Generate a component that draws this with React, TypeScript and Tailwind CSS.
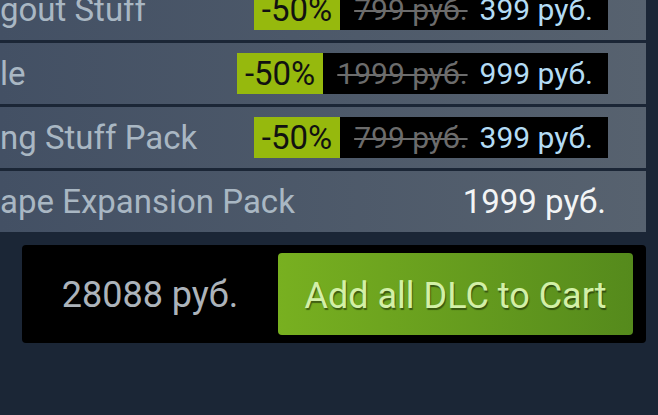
import React from 'react';

type Dlc = {
  name: string;
  price: string;
  original?: string;
  discount?: string;
};

const items: Dlc[] = [
  { name: 'gout Stuff', discount: '-50%', original: '799 руб.', price: '399 руб.' },
  { name: 'le', discount: '-50%', original: '1999 руб.', price: '999 руб.' },
  { name: 'ng Stuff Pack', discount: '-50%', original: '799 руб.', price: '399 руб.' },
  { name: 'ape Expansion Pack', price: '1999 руб.' },
];

function DlcRow({ item }: { item: Dlc }) {
  return (
    <div className="flex h-[61px] items-center justify-between bg-gradient-to-r from-[#435064] to-[#57626f] pr-[38px]">
      <span className="whitespace-nowrap text-[33px] leading-none text-[#a9b7c3]">{item.name}</span>
      {item.discount ? (
        <div className="flex h-[41px] items-stretch">
          <div className="flex items-center bg-[#96b90d] px-[8px] text-[33px] leading-none text-[#111]">
            {item.discount}
          </div>
          <div className="flex items-center gap-[12px] bg-black pl-[14px] pr-[15px] leading-none">
            <span className="text-[30px] text-[#6c6c6c] line-through decoration-[2px]">{item.original}</span>
            <span className="text-[30px] text-[#b4dcf4]">{item.price}</span>
          </div>
        </div>
      ) : (
        <span className="text-[33px] leading-none text-[#f2f4f5] pr-[2px]">{item.price}</span>
      )}
    </div>
  );
}

export default function App() {
  return (
    <div
      className="h-screen w-full overflow-hidden bg-[#1b2636] pr-[12px]"
      style={{ fontFamily: 'Roboto, "Noto Sans", sans-serif' }}
    >
      {/* DLC list */}
      <div className="-mt-[21px] flex flex-col gap-[3px]">
        {items.map((item) => (
          <DlcRow key={item.name} item={item} />
        ))}
      </div>

      {/* Total + button */}
      <div className="ml-[22px] mt-[13px] flex h-[98px] items-center rounded-[4px] bg-black py-[9px] pr-[13px]">
        <div className="flex flex-1 justify-center pt-[2px] text-[36px] leading-none text-[#acb3ba]">28088 руб.</div>
        <button className="flex h-[82px] w-[355px] items-center justify-center rounded-[4px] bg-gradient-to-r from-[#78b020] to-[#558a1c] pt-[3px] text-[36px] leading-none text-[#d3f0a7] [text-shadow:1px_2px_1px_rgba(0,0,0,0.45)]">
          Add all DLC to Cart
        </button>
      </div>
    </div>
  );
}
